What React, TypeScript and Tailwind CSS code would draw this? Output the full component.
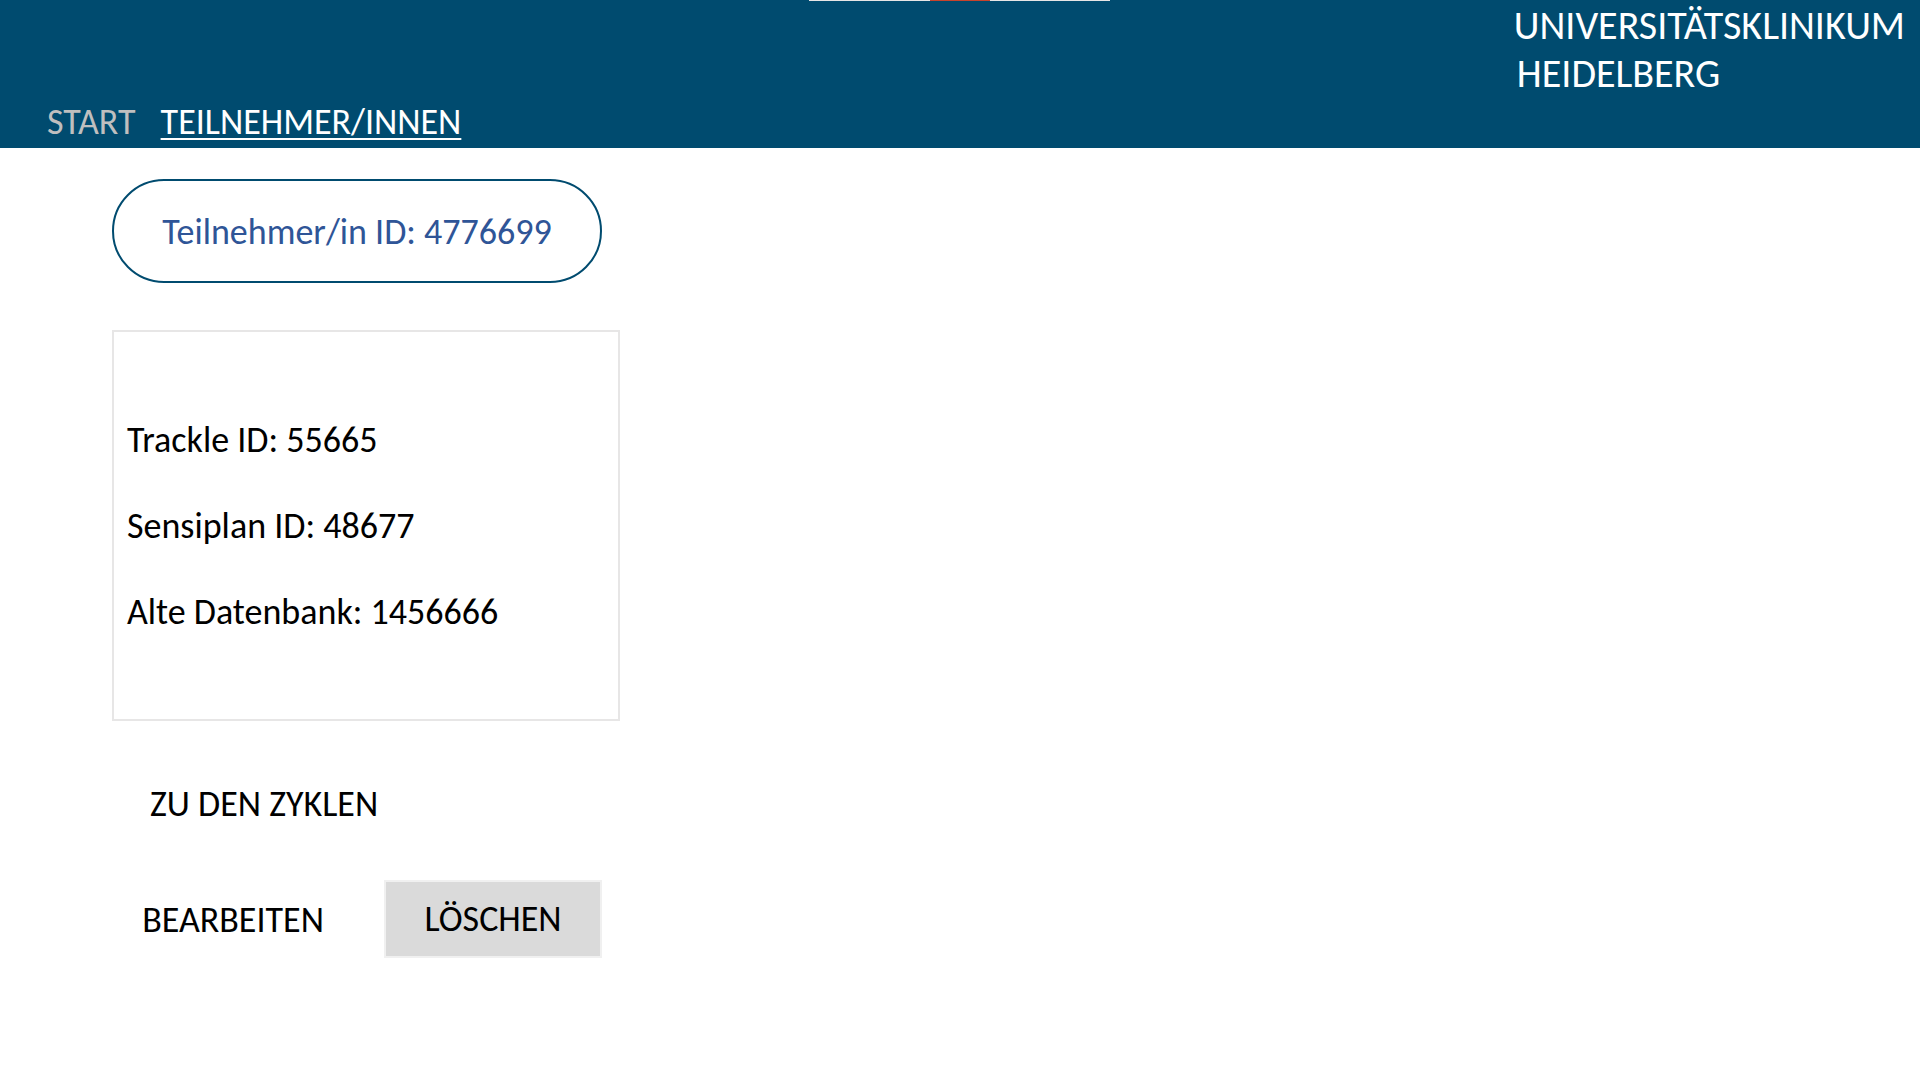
const ids = [
  { label: 'Trackle ID', value: '55665' },
  { label: 'Sensiplan ID', value: '48677' },
  { label: 'Alte Datenbank', value: '1456666' },
];

function Header() {
  return (
    <header className="relative flex h-[148px] items-stretch justify-between bg-[#004b6f] text-white">
      <div className="absolute inset-x-0 top-0 flex justify-center pr-px" aria-hidden="true">
        <div className="flex h-px w-[301px] justify-center bg-[#e7e6e6]">
          <div className="w-[60px] bg-[#c8432b]" />
        </div>
      </div>
      <nav className="flex items-end gap-[25px] pb-1 pl-[47px] text-[36px] leading-[43px]">
        <a href="#start" className="text-[#bfbfbf]">
          START
        </a>
        <a
          href="#teilnehmer"
          aria-current="page"
          className="underline decoration-2 underline-offset-4 [text-decoration-skip-ink:none]"
        >
          TEILNEHMER/INNEN
        </a>
      </nav>
      <div className="pt-[2px] pr-[15px] text-[40px] leading-[48px]">
        <div>UNIVERSITÄTSKLINIKUM</div>
        <div className="pl-[3px]">HEIDELBERG</div>
      </div>
    </header>
  );
}

export default function App() {
  return (
    <div className="min-h-screen bg-white font-['Carlito','Open_Sans',sans-serif] text-black">
      <Header />
      <main className="flex flex-col items-start pt-[31px] pl-[112px] text-[36px] leading-[43px]">
        <h1 className="flex h-[104px] min-w-[490px] items-center justify-center rounded-full border-2 border-[#004b6f] px-8 pt-[2px] text-[#2f5597]">
          Teilnehmer/in ID: 4776699
        </h1>
        <section className="mt-[47px] flex h-[391px] w-[508px] flex-col justify-center border-2 border-[#e7e6e6] px-[13px]">
          {ids.map((id) => (
            <p key={id.label} className="leading-[86px]">
              {id.label}: {id.value}
            </p>
          ))}
        </section>
        <button type="button" className="mt-11 h-[78px] px-[38px]">
          ZU DEN ZYKLEN
        </button>
        <div className="mt-[37px] flex">
          <button type="button" className="h-[78px] w-[242px] pt-[2px]">
            BEARBEITEN
          </button>
          <button type="button" className="ml-[30px] h-[78px] w-[218px] border-2 border-[#f0f0f0] bg-[#dadada]">
            LÖSCHEN
          </button>
        </div>
      </main>
    </div>
  );
}
